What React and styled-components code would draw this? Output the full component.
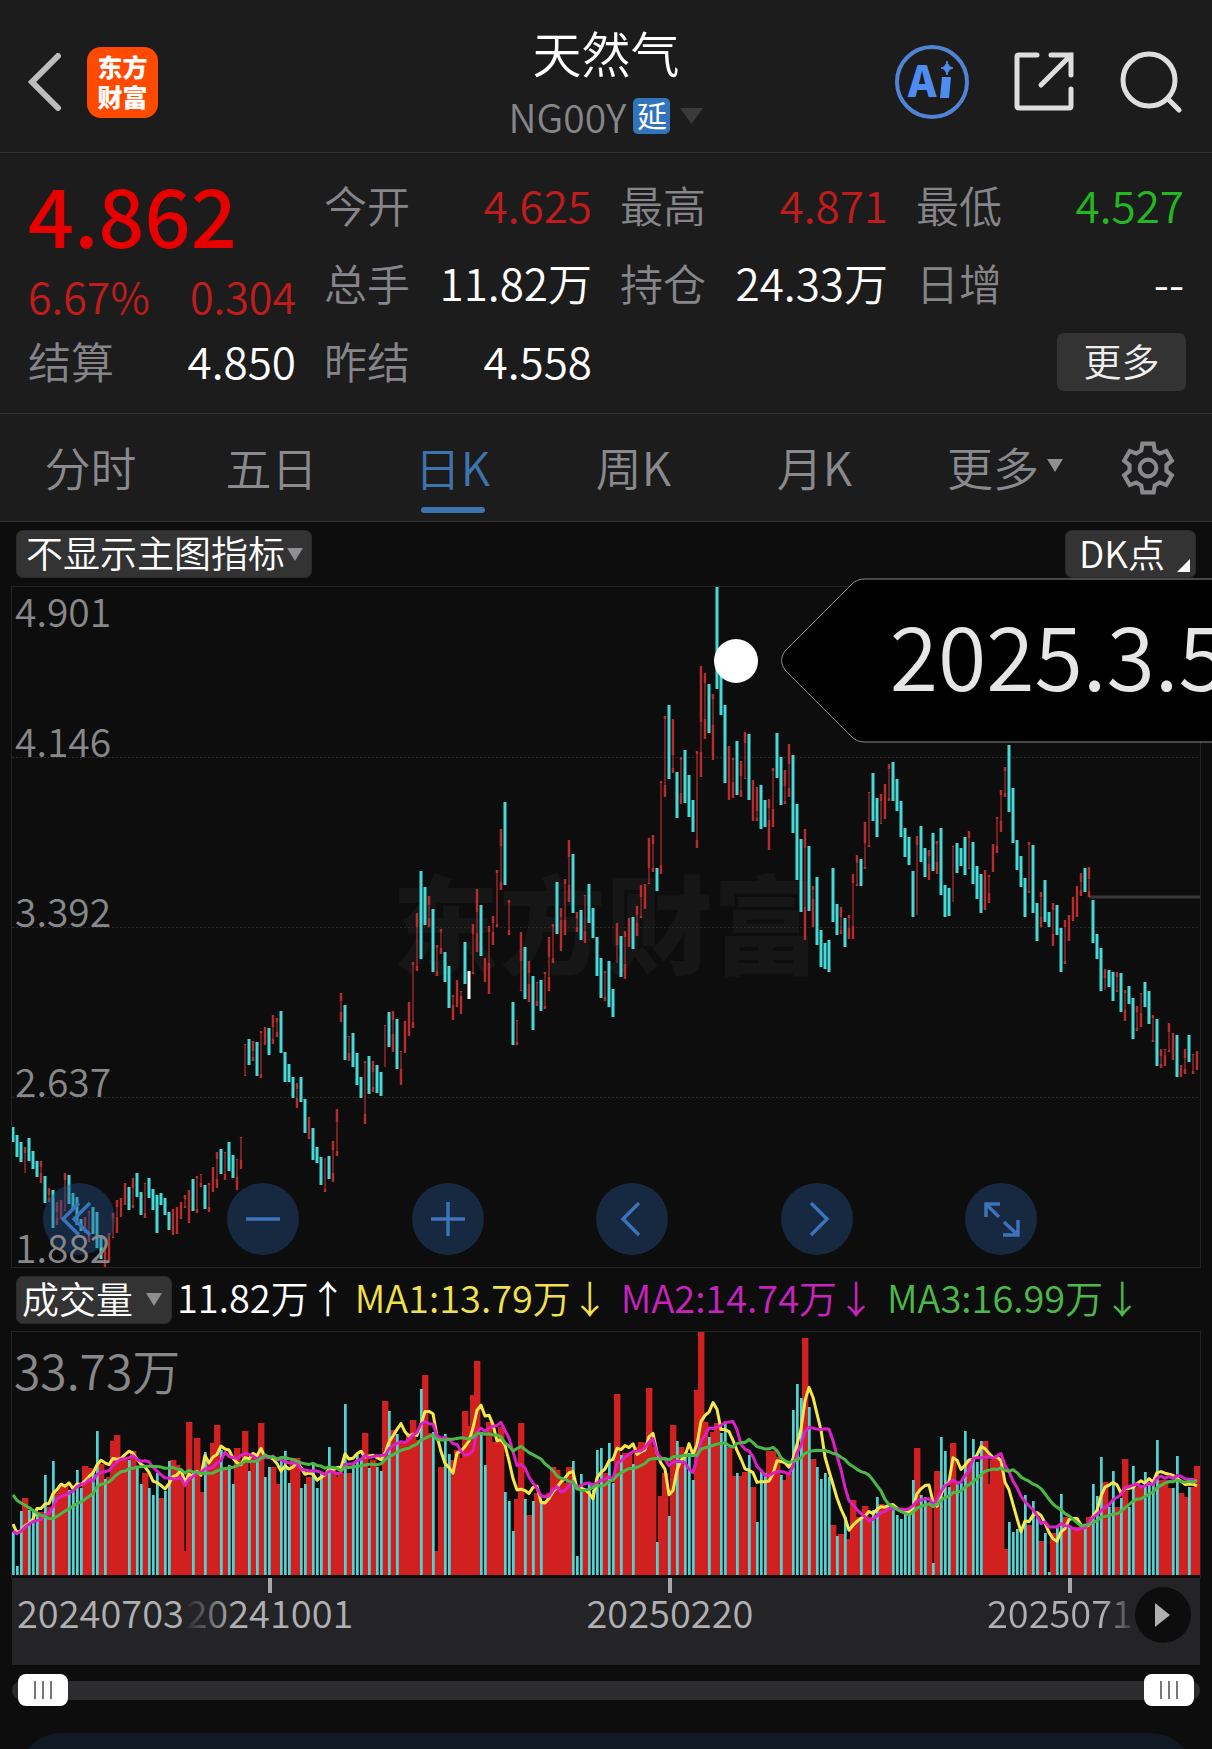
import React, { useState } from "react";
import styled, { createGlobalStyle } from "styled-components";

const GlobalStyle = createGlobalStyle`
  * {
    box-sizing: border-box;
  }

  body {
    margin: 0;
    background: #0d0d0d;
    color: #ffffff;
    font-family: "Noto Sans CJK SC", "Noto Sans", sans-serif;
    font-weight: 350;
  }

  button, select, input {
    font: inherit;
    color: inherit;
  }
`;

const UP = "#b92c2c";
const DOWN = "#45d9d7";

// One token per day: direction, high, low and (for hollow days) the body range.
const CANDLES = `
c540,555 c548,570 c555,575 r560,586,566,586 c551,574 c564,582 c574,590 r574,596,580,586 c589,616 r601,615,608,611
c603,641 r615,638,625,631 r613,632 r586,624,593,623 c588,617 c606,623 c610,638 c632,644 r630,646 r624,655,626,646
c620,647 c625,661 c648,672 r661,680 r646,675 r626,651,631,650 r613,646,620,630 r611,630 r596,618 c600,623
r591,621,601,618 c586,610 c605,628 r596,631,597,626 c591,611 c602,623 c608,646 c606,618 c611,628 c625,643
r622,648 r620,647 r615,632 r608,621,612,619 r603,636 c592,624 r589,626,591,622 r587,600,588,596 c598,622 r596,625,598,620
r580,605 r565,601,572,592 c562,587 r565,593,566,587 c555,584 c568,591 r572,603,573,590 r550,582,551,573 r457,489,458,488 c452,478
r454,474,464,470 c455,489 r444,491,446,487 r440,458 c441,468 r428,457,440,452 r431,450,435,445 c424,466 c465,495 c477,495
c490,511 r496,521,502,511 c490,515 c512,546 r530,552 c541,573 c560,576 c570,598 r571,605,571,602 c569,592
r554,595,563,586 r522,569,535,564 r406,435,414,425 c418,473 r449,474,450,466 c446,480 c466,498 c490,511 r474,537,476,527 c469,507
r474,505,485,500 c478,506 c485,509 r438,480,439,480 c425,460 r424,465,433,447 c432,482 r464,498,465,482 r434,466 r415,449
r375,441,378,435 r326,384,340,379 c284,372 c300,338 r309,340,318,331 c322,385 r358,389,361,384 r342,367,345,361 c365,395 c379,421
r408,433,410,418 r393,420 r404,427,405,409 c355,397 w384,412 r337,387,347,385 r302,365,325,346 c318,369 r371,395 r339,407,345,376
r329,358,336,345 r283,340,286,337 r242,303,259,295 c215,298 r313,348,316,343 c415,458 r433,458,434,455 r345,404,374,403 c360,412 r374,415,386,397
c389,443 r395,419,396,414 c393,424 r385,422,387,419 r350,404,370,390 r337,376,340,371 c295,347 r321,364,330,333 r292,348,297,333 r253,315,270,298
c267,326 r325,345,331,340 c323,353 r308,356,309,344 c297,336 c321,351 c350,389 c371,411 r384,414,386,410 c374,420
c402,430 r336,376,358,376 c349,390 r344,392,350,377 r331,360 c330,362 r319,349,328,336 r298,331,310,329 r297,322 r251,297,281,296
r248,285,257,281 c281,304 r194,287,196,278 r129,210,132,198 c118,192 r132,186,168,181 c185,231 r170,217,173,206 c163,216 c188,230
c213,245 r164,261,167,253 r79,190,135,165 r86,152,96,132 c97,146 r107,173,112,138 c0,102 c70,128 c118,196 r159,213
r171,211,173,195 c154,208 r174,210,189,203 r145,192,156,191 c147,213 r193,234 r200,234,224,231 c198,242 c213,240 r212,263,221,233
r181,240,184,222 c146,191 c170,218 r183,217,199,214 r157,210,177,201 c168,246 c217,293 c252,325 r242,353,261,320 c259,324
r299,340,303,312 c290,358 c343,380 c356,382 c353,385 c281,335 c317,348 r320,347,330,343 c331,360 r328,352,331,341
r287,352,296,339 r268,299,276,297 c272,299 r235,282,256,280 r205,260,206,258 c186,234 c211,250 r207,237,214,236 r197,232 r177,214,182,211
c175,214 c192,224 c214,250 c241,270 c250,278 c284,330 r249,328,258,328 c239,275 c261,290 r263,293,269,277
c246,284 r254,287,257,275 c241,308 c298,330 c301,329 r259,315,260,315 c256,286 c261,279 c250,288 r244,282,251,281
c255,297 c279,312 c287,326 r283,323 r288,316,290,306 r257,285 r230,266,232,259 r203,245,208,234 r180,210,184,206 c158,225
c201,256 c253,283 c269,300 c291,330 r255,306,258,304 c258,326 c316,354 r305,340,310,330 c293,335 c325,340
r316,359,323,347 c318,348 c341,385 r333,377,340,374 r328,354 r310,334 r299,330 r286,309,295,303 c281,305 r280,310,292,304
c313,356 c347,372 c361,404 r382,403,391,403 c383,400 c385,414 r385,405,390,403 c386,425 r403,434,406,423 c399,417
c411,452 r419,444,425,441 r406,440,407,426 c395,420 c404,437 r428,455,431,453 c432,479 r462,481,469,477 r462,479,463,468 r436,465,445,463
r446,473 c448,490 r478,490 r462,487,471,482 c448,475 r467,487,468,484 r464,483
`
  .trim()
  .split(/\s+/)
  .map((token) => {
    const [high, low, bodyTop, bodyBottom] = token.slice(1).split(",").map(Number);
    return { kind: token[0], high, low, bodyTop, bodyBottom };
  });

// Daily volume, negative on falling days.
const VOLUMES = [
  -43, -9, -64, 77, -65, -65, -62, 63, -100, 68, -114, 82, 90, 90, -85, -85, -105, -87, 109, 107,
  -103, -144, 111, -96, 98, 134, 140, 115, 115, -115, 124, -109, -91, 102, -87, -80, -102, 77, -84, -114,
  115, 110, 102, 24, 153, -102, 137, 83, -123, 115, 132, 150, -125, 108, -110, -91, 127, 115, 144, -104,
  118, -115, 152, -98, -108, 108, 91, -115, -124, -92, 117, 117, -87, -91, 98, -111, -87, -102, 102, -128,
  107, 98, 102, -171, 102, -111, -120, -115, 142, -107, 115, -108, -104, 174, -164, 145, -141, 133, 133, 142,
  155, 135, -186, 200, 142, -143, 24, 108, -141, -121, 115, 125, 117, 164, 149, 180, 214, -142, -110, 153,
  133, 133, 148, -83, -74, -44, 76, 152, -76, 60, -74, 82, -72, 72, 82, 108, 105, 98, 92, 108,
  -114, -19, -101, 85, -91, -85, -125, -127, 102, -132, -92, 181, -120, 122, 122, -111, 128, 133, 132, 187,
  128, -33, 79, 102, -59, 150, -134, 128, -123, -122, -95, 185, 243, 153, -138, 143, 152, -142, -152, 128,
  99, -102, 99, 103, -120, 88, -53, -103, -102, 124, 124, 118, -100, 95, 102, -165, -191, -177, 237, -168,
  116, -108, -96, -102, -98, 50, -39, 41, -58, 36, 75, 58, -57, 69, 58, -65, -78, 71, 67, 68,
  -68, -60, -56, -62, -67, -95, 127, -80, -78, 70, -12, 104, -138, -124, -88, 132, -92, -92, -144, 115,
  -136, -113, -134, 134, 91, 115, 117, 115, 26, -53, -43, -46, -48, -80, 50, -74, -60, 34, -42, -3,
  42, -48, -81, 58, -48, 48, 48, 48, -48, 58, -91, -79, -118, 93, -68, -104, 68, -77, 116, -68,
  -109, 88, 90, -103, -92, -92, -135, 95, 95, 87, -87, -119, 82, 78, -88, 88, 109,
];

// Volumes of the days before the visible range, needed by the moving averages.
const EARLIER = [
  116, 118, 120, 114, 116, 118, 112, 116, 115, 116, 37, 38, 36, 37, 37, 53, 53, 53, 53,
];

const STEP = 4;
const PLOT_WIDTH = 1188;
const PRICE_HEIGHT = 680;
const VOLUME_HEIGHT = 246;
const VOLUME_BASE = 243;

const averagePoints = (days) => {
  const all = [...EARLIER, ...VOLUMES].map(Math.abs);
  return VOLUMES.map((_, i) => {
    const end = i + EARLIER.length + 1;
    const part = all.slice(end - days, end);
    const mean = part.reduce((sum, v) => sum + v, 0) / days;
    return `${i * STEP + 1},${(VOLUME_BASE - mean).toFixed(1)}`;
  }).join(" ");
};

const gearPoints = Array.from({ length: 6 }, (_, i) =>
  [
    [-21, 18],
    [-13, 24],
    [13, 24],
    [21, 18],
  ].map(([angle, r]) => {
    const a = ((i * 60 + angle) * Math.PI) / 180;
    return `${(26 + r * Math.sin(a)).toFixed(1)},${(26 - r * Math.cos(a)).toFixed(1)}`;
  })
)
  .flat()
  .join(" ");

const Page = styled.main`
  overflow: hidden;
`;

const Header = styled.header`
  display: grid;
  grid-template-columns: 1fr auto 1fr;
  align-items: center;
  height: 153px;
  padding: 0 28px;
  background: #1c1c1c;
  border-bottom: 1px solid #333333;
`;

const HeaderSide = styled.div`
  display: flex;
  align-items: center;
  justify-content: ${(props) => (props.$end ? "flex-end" : "flex-start")};
  gap: ${(props) => (props.$end ? "43px" : "24px")};
  padding: ${(props) => (props.$end ? "12px 2px 0 0" : "12px 0 0")};
`;

const IconButton = styled.button`
  display: flex;
  align-items: center;
  justify-content: center;
  padding: 0;
  background: none;
  border: 0;
  cursor: pointer;
`;

const Logo = styled.a`
  display: flex;
  flex-direction: column;
  align-items: center;
  justify-content: center;
  width: 71px;
  height: 71px;
  padding-bottom: 3px;
  border-radius: 14px;
  background: #ff4a00;
  color: #ffffff;
  font-size: 25px;
  font-weight: 900;
  line-height: 30px;
  text-decoration: none;
`;

const Heading = styled.div`
  display: flex;
  flex-direction: column;
  align-items: center;
  gap: 4px;
  padding-top: 12px;
`;

const Title = styled.h1`
  margin: 0;
  font-size: 49px;
  font-weight: 350;
  line-height: 64px;
`;

const SymbolButton = styled(IconButton)`
  gap: 7px;
  color: #85858a;
  font-size: 39px;
  line-height: 56px;

  svg {
    margin-left: 3px;
  }
`;

const DelayBadge = styled.span`
  width: 37px;
  height: 36px;
  border-radius: 5px;
  background: #3274bb;
  color: #ffffff;
  font-size: 30px;
  font-weight: 400;
  line-height: 33px;
  text-align: center;
`;

const QuotePanel = styled.section`
  display: grid;
  grid-template-columns: repeat(4, minmax(0, 1fr));
  grid-template-rows: repeat(3, 78px);
  column-gap: 28px;
  padding: 14px 28px 12px;
  background: #1c1c1c;
  border-bottom: 1px solid #333333;
`;

const Summary = styled.div`
  grid-row: span 2;
`;

const Price = styled.div`
  color: #e60000;
  font-size: 81px;
  font-weight: 500;
  line-height: 92px;
`;

const Change = styled.div`
  display: flex;
  justify-content: space-between;
  margin-top: 10px;
  color: #c01c1c;
  font-size: 43px;
  line-height: 52px;
`;

const tones = {
  up: "#c01c1c",
  down: "#22b822",
  plain: "#ffffff",
};

const Quote = styled.div`
  display: flex;
  align-items: center;
  justify-content: space-between;
  padding-bottom: 4px;
  font-size: 43px;
  line-height: 60px;
  white-space: nowrap;
`;

const QuoteLabel = styled.span`
  color: #85858a;
`;

const QuoteValue = styled.span`
  color: ${(props) => tones[props.$tone]};
  font-size: 44px;
`;

const MoreCell = styled.div`
  grid-column: 4;
  display: flex;
  align-items: center;
  justify-content: flex-end;
  margin-right: -2px;
`;

const MoreButton = styled.button`
  width: 129px;
  height: 58px;
  padding: 0 0 4px;
  border: 0;
  border-radius: 7px;
  background: #333333;
  color: #eeeeee;
  font-size: 38px;
  line-height: 50px;
  cursor: pointer;
`;

const Tabs = styled.nav`
  display: grid;
  grid-template-columns: repeat(5, 181fr) 200fr 86fr;
  height: 108px;
  padding-right: 21px;
  background: #1c1c1c;
  border-bottom: 1px solid #333333;
`;

const Tab = styled.button`
  position: relative;
  display: flex;
  align-items: center;
  justify-content: center;
  gap: 8px;
  padding: 0 0 4px;
  border: 0;
  background: none;
  color: ${(props) => (props.$active ? "#3d74b0" : "#8a8a8e")};
  font-size: 46px;
  line-height: 60px;
  white-space: nowrap;
  cursor: pointer;

  &::after {
    content: "";
    display: ${(props) => (props.$active ? "block" : "none")};
    position: absolute;
    bottom: 8px;
    width: 64px;
    height: 6px;
    border-radius: 3px;
    background: #3d74b0;
  }
`;

const Toolbar = styled.div`
  display: flex;
  align-items: flex-start;
  justify-content: space-between;
  height: 65px;
  padding: 8px 16px 0;
`;

const Chip = styled.button`
  display: flex;
  align-items: center;
  gap: ${(props) => props.$gap || "2px"};
  height: 48px;
  padding: ${(props) => props.$padding};
  border: 1px solid #2a2a2a;
  border-radius: 7px;
  background: #333333;
  color: #ffffff;
  font-size: 37px;
  line-height: 42px;
  white-space: nowrap;
  cursor: pointer;

  span {
    padding-bottom: 4px;
  }
`;

const CornerMark = styled.svg`
  align-self: flex-end;
  margin-bottom: 5px;
`;

const Frame = styled.div`
  position: relative;
  margin: 0 12px;
  height: ${(props) => props.$height}px;
  box-shadow: 0 0 0 1px #242424;
`;

const Plot = styled.svg`
  position: relative;
  display: block;
  width: 100%;
  height: 100%;
`;

const Watermark = styled.div`
  position: absolute;
  inset: 0;
  display: flex;
  align-items: center;
  justify-content: center;
  padding-bottom: 16px;
  color: #161616;
  font-size: 107px;
  font-weight: 900;
  line-height: 1;
`;

const PriceScale = styled.div`
  position: absolute;
  inset: 0;
  z-index: 3;
  display: grid;
  grid-template-rows: repeat(4, 1fr);
  padding-left: 3px;
  color: #88888a;
  font-size: 39px;
  line-height: 34px;
  pointer-events: none;
`;

const ScaleBand = styled.div`
  display: flex;
  flex-direction: column;
  justify-content: ${(props) => (props.$first ? "space-between" : "flex-end")};
  padding-top: 6px;

  &:last-child {
    padding-bottom: 4px;
  }
`;

const Controls = styled.div`
  position: absolute;
  left: 31px;
  right: 163px;
  bottom: 12px;
  z-index: 2;
  display: flex;
  justify-content: space-between;
`;

const RoundButton = styled.button`
  width: 72px;
  height: 72px;
  padding: 0;
  border: 0;
  border-radius: 50%;
  background: rgba(39, 82, 139, 0.42);
  cursor: pointer;
`;

const PeakDot = styled.i`
  position: absolute;
  left: 59.1%;
  top: 52px;
  width: 44px;
  height: 44px;
  border-radius: 50%;
  background: #ffffff;
`;

const Callout = styled.div`
  position: absolute;
  left: 64.7%;
  right: -12px;
  top: -9px;
  height: 165px;
  padding-left: 109px;
  overflow: hidden;
  color: #e6e6e6;
  font-size: 88px;
  line-height: 150px;
  white-space: nowrap;

  svg {
    position: absolute;
    left: 0;
    top: 0;
  }

  span {
    position: relative;
  }
`;

const Legend = styled.div`
  display: flex;
  align-items: center;
  gap: 12px;
  height: 65px;
  padding-left: 16px;
  font-size: 37px;
  line-height: 42px;
  white-space: nowrap;
`;

const LegendItem = styled.span`
  padding-bottom: 6px;
  margin: ${(props) => (props.$tight ? "0 -4px 0 -7px" : "0")};
  color: ${(props) => props.$color};
  font-size: 38px;
`;

const VolumeMax = styled.div`
  position: absolute;
  left: 2px;
  top: 8px;
  color: #88888a;
  font-size: 48px;
  line-height: 58px;
`;

const DateAxis = styled.div`
  position: relative;
  display: flex;
  height: 87px;
  margin: 0 12px;
  overflow: hidden;
  background: #242426;
  color: #b0b0b2;
  font-size: 38px;
  line-height: 38px;
`;

const FirstDate = styled.time`
  flex: 0 0 4.88%;
  min-width: 0;
  z-index: 1;
  padding: 15px 0 0 5px;
  white-space: nowrap;

  &::after {
    content: "";
    display: inline-block;
    width: 50px;
    height: 44px;
    vertical-align: top;
    background: linear-gradient(90deg, #242426, rgba(36, 36, 38, 0));
  }
`;

const DateMark = styled.time`
  display: flex;
  flex: 0 0 33.67%;
  flex-direction: column;
  align-items: center;

  &::before {
    content: "";
    width: 4px;
    height: 15px;
    background: #a8a8aa;
  }
`;

const LastDate = styled(DateMark)`
  span {
    width: 166px;
    color: transparent;
    background: linear-gradient(90deg, #b0b0b2 116px, #3a3a3c 146px);
    background-clip: text;
  }
`;

const PlayButton = styled(RoundButton)`
  position: absolute;
  right: 9px;
  top: 9px;
  z-index: 2;
  width: 56px;
  height: 56px;
  background: #0d0d0d;
`;

const RangeTrack = styled.div`
  position: relative;
  height: 19px;
  margin: 16px 12px 33px;
  border-radius: 10px;
  background: #2c2c2e;
`;

const RangeInput = styled.input`
  position: absolute;
  left: 6px;
  top: -7px;
  width: calc(100% - 12px);
  height: 32px;
  margin: 0;
  appearance: none;
  background: none;
  pointer-events: none;

  &::-webkit-slider-thumb {
    appearance: none;
    width: 50px;
    height: 32px;
    border-radius: 8px;
    background:
      linear-gradient(#77777a, #77777a) 16px 7px / 2px 18px no-repeat,
      linear-gradient(#77777a, #77777a) 24px 7px / 2px 18px no-repeat,
      linear-gradient(#77777a, #77777a) 32px 7px / 2px 18px no-repeat,
      #ffffff;
    pointer-events: auto;
    cursor: grab;
  }
`;

const BottomSheet = styled.div`
  height: 16px;
  margin: 0 18px;
  overflow: hidden;
`;

const SheetBody = styled.div`
  height: 88px;
  border-radius: 44px;
  background: #111a24;
`;

const Caret = ({ width = 16, height = 13, color = "#8e8e93" }) => (
  <svg width={width} height={height} viewBox="0 0 16 13" preserveAspectRatio="none">
    <path d="M0 0H16L8 13Z" fill={color} />
  </svg>
);

const controls = [
  { label: "最早", d: "M36 20L20 36L36 52M47 20L31 36L47 52" },
  { label: "缩小", d: "M19 36H53" },
  { label: "放大", d: "M19 36H53M36 19V53" },
  { label: "向左", d: "M43 20L27 36L43 52" },
  { label: "向右", d: "M30 20L46 36L30 52" },
  { label: "全屏", d: "M35 21H21V34M21 21L34 34M39 39L53 52M53 37V52H38" },
];

const quotes = [
  { label: "今开", value: "4.625", tone: "up" },
  { label: "最高", value: "4.871", tone: "up" },
  { label: "最低", value: "4.527", tone: "down" },
  { label: "总手", value: "11.82万", tone: "plain" },
  { label: "持仓", value: "24.33万", tone: "plain" },
  { label: "日增", value: "--", tone: "plain" },
  { label: "结算", value: "4.850", tone: "plain" },
  { label: "昨结", value: "4.558", tone: "plain" },
];

const tabs = ["分时", "五日", "日K", "周K", "月K"];

function Candle({ item, x }) {
  if (item.kind !== "r") {
    return (
      <path
        d={`M${x} ${item.high}V${item.low}`}
        stroke={item.kind === "w" ? "#ffffff" : DOWN}
        strokeWidth="3"
      />
    );
  }
  if (item.bodyTop === undefined) {
    return <path d={`M${x} ${item.high}V${item.low}`} stroke={UP} strokeWidth="2.4" />;
  }
  return (
    <g stroke={UP}>
      <path d={`M${x} ${item.high}V${item.bodyTop}M${x} ${item.bodyBottom}V${item.low}`} strokeWidth="2.4" />
      <path d={`M${x} ${item.bodyTop}V${item.bodyBottom}`} strokeWidth="1.2" />
    </g>
  );
}

function PriceChart() {
  return (
    <Frame $height={PRICE_HEIGHT}>
      <Watermark aria-hidden="true">东方财富</Watermark>
      <Plot viewBox={`0 0 ${PLOT_WIDTH} ${PRICE_HEIGHT}`} preserveAspectRatio="none" fill="none">
        {[170, 340, 510].map((y) => (
          <path key={y} d={`M0 ${y + 0.5}H${PLOT_WIDTH}`} stroke="#2b2b2b" strokeDasharray="2 2" />
        ))}
        <path d="M1077 310H1188" stroke="#383838" strokeWidth="3" />
        {CANDLES.map((item, i) => (
          <Candle key={i} item={item} x={i * STEP + 1} />
        ))}
      </Plot>
      <PriceScale>
        <ScaleBand $first>
          <span>4.901</span>
          <span>4.146</span>
        </ScaleBand>
        {["3.392", "2.637", "1.882"].map((value) => (
          <ScaleBand key={value}>{value}</ScaleBand>
        ))}
      </PriceScale>
      <Controls>
        {controls.map(({ label, d }) => (
          <RoundButton key={label} aria-label={label}>
            <svg width="72" height="72" viewBox="0 0 72 72" fill="none" stroke="#3b74bb" strokeWidth="3.4">
              <path d={d} />
            </svg>
          </RoundButton>
        ))}
      </Controls>
      <PeakDot />
      <Callout>
        <svg width="900" height="165" viewBox="0 0 900 165">
          <path
            d="M920 1H84Q76 1 71 6L4 73Q-3 82 4 92L71 159Q76 164 84 164H920Z"
            fill="#000000"
            fillOpacity="0.95"
            stroke="#8a8a8a"
          />
        </svg>
        <span>2025.3.5</span>
      </Callout>
    </Frame>
  );
}

function VolumeChart() {
  const bars = VOLUMES.map((value, i) => ({ value, x: i * STEP + 1 }));
  return (
    <Frame $height={VOLUME_HEIGHT}>
      <Plot viewBox={`0 0 ${PLOT_WIDTH} ${VOLUME_HEIGHT}`} preserveAspectRatio="none" fill="none">
        {bars
          .filter((bar) => bar.value > 0)
          .map(({ x, value }) => (
            <rect key={x} x={x - 3} y={VOLUME_BASE - value} width="6.4" height={value} fill="#d02020" />
          ))}
        {bars
          .filter((bar) => bar.value < 0)
          .map(({ x, value }) => (
            <rect key={x} x={x - 1} y={VOLUME_BASE + value} width="2.7" height={-value} fill="#4fd3d3" />
          ))}
        <g strokeWidth="3" strokeLinejoin="round">
          <polyline points={averagePoints(5)} stroke="#f7e84a" />
          <polyline points={averagePoints(10)} stroke="#dd1fc6" />
          <polyline points={averagePoints(20)} stroke="#4cb848" />
        </g>
      </Plot>
      <VolumeMax>33.73万</VolumeMax>
    </Frame>
  );
}

export default function App() {
  const [active, setActive] = useState("日K");
  const [from, setFrom] = useState(0);
  const [to, setTo] = useState(100);

  return (
    <Page>
      <GlobalStyle />
      <Header>
        <HeaderSide>
          <IconButton aria-label="返回">
            <svg width="35" height="58" viewBox="0 0 35 58" fill="none" stroke="#bdbdbd" strokeWidth="6">
              <path d="M30 3L4 29L30 55" strokeLinecap="round" />
            </svg>
          </IconButton>
          <Logo href="#">
            <span>东方</span>
            <span>财富</span>
          </Logo>
        </HeaderSide>
        <Heading>
          <Title>天然气</Title>
          <SymbolButton>
            NG00Y
            <DelayBadge>延</DelayBadge>
            <Caret width={23} height={16} color="#3a3a3a" />
          </SymbolButton>
        </Heading>
        <HeaderSide $end>
          <IconButton aria-label="AI">
            <svg width="76" height="76" viewBox="0 0 76 76" fill="#4f8cf0">
              <circle cx="38" cy="38" r="35" fill="none" stroke="#4f84d4" strokeWidth="4" />
              <text x="14" y="53" fontSize="43" fontWeight="900">
                A
              </text>
              <path d="M48 33H57L55 54H46Z" />
              <path d="M53 17Q54 23 59 24Q54 25 53 31Q52 25 47 24Q52 23 53 17Z" stroke="#4f8cf0" />
            </svg>
          </IconButton>
          <IconButton aria-label="分享">
            <svg width="62" height="62" viewBox="0 0 62 62" fill="none" stroke="#dedede" strokeWidth="5" strokeLinecap="round">
              <path d="M24 4H6Q4 4 4 6V55Q4 57 6 57H56Q58 57 58 55V38" />
              <path d="M38 4H58V24M58 4L28 34" />
            </svg>
          </IconButton>
          <IconButton aria-label="搜索">
            <svg width="64" height="64" viewBox="0 0 64 64" fill="none" stroke="#dedede" strokeWidth="5" strokeLinecap="round">
              <circle cx="31" cy="30" r="26" />
              <path d="M50 49L61 60" />
            </svg>
          </IconButton>
        </HeaderSide>
      </Header>

      <QuotePanel>
        <Summary>
          <Price>4.862</Price>
          <Change>
            <span>6.67%</span>
            <span>0.304</span>
          </Change>
        </Summary>
        {quotes.map(({ label, value, tone }) => (
          <Quote key={label}>
            <QuoteLabel>{label}</QuoteLabel>
            <QuoteValue $tone={tone}>{value}</QuoteValue>
          </Quote>
        ))}
        <MoreCell>
          <MoreButton>更多</MoreButton>
        </MoreCell>
      </QuotePanel>

      <Tabs>
        {tabs.map((name) => (
          <Tab key={name} $active={name === active} onClick={() => setActive(name)}>
            {name}
          </Tab>
        ))}
        <Tab>
          更多
          <Caret width={16} height={13} />
        </Tab>
        <IconButton aria-label="设置">
          <svg width="54" height="54" viewBox="0 0 52 52" fill="none" stroke="#8a8a8e" strokeWidth="4">
            <polygon points={gearPoints} />
            <circle cx="26" cy="26" r="8" />
          </svg>
        </IconButton>
      </Tabs>

      <Toolbar>
        <Chip $padding="0 8px 0 9px">
          <span>不显示主图指标</span>
          <Caret />
        </Chip>
        <Chip $padding="0 5px 0 13px" $gap="12px">
          <span>DK点</span>
          <CornerMark width="13" height="13" viewBox="0 0 13 13">
            <path d="M13 0V13H0Z" fill="#ffffff" />
          </CornerMark>
        </Chip>
      </Toolbar>
      <PriceChart />

      <Legend>
        <Chip $padding="0 9px 0 5px" $gap="13px">
          <span>成交量</span>
          <Caret />
        </Chip>
        <LegendItem $color="#ffffff" $tight>
          11.82万↑
        </LegendItem>
        <LegendItem $color="#f0e050">MA1:13.79万↓</LegendItem>
        <LegendItem $color="#c624bd">MA2:14.74万↓</LegendItem>
        <LegendItem $color="#4db84a">MA3:16.99万↓</LegendItem>
      </Legend>
      <VolumeChart />
      <DateAxis>
        <FirstDate>20240703</FirstDate>
        <DateMark>
          <span>20241001</span>
        </DateMark>
        <DateMark>
          <span>20250220</span>
        </DateMark>
        <LastDate>
          <span>2025071</span>
        </LastDate>
        <PlayButton aria-label="播放">
          <svg width="56" height="56" viewBox="0 0 56 56">
            <path d="M20 16L35 28L20 40Z" fill="#b0b0b0" />
          </svg>
        </PlayButton>
      </DateAxis>

      <RangeTrack>
        <RangeInput
          type="range"
          aria-label="开始日期"
          value={from}
          onChange={(e) => setFrom(Math.min(+e.target.value, to - 5))}
        />
        <RangeInput
          type="range"
          aria-label="结束日期"
          value={to}
          onChange={(e) => setTo(Math.max(+e.target.value, from + 5))}
        />
      </RangeTrack>
      <BottomSheet>
        <SheetBody />
      </BottomSheet>
    </Page>
  );
}
